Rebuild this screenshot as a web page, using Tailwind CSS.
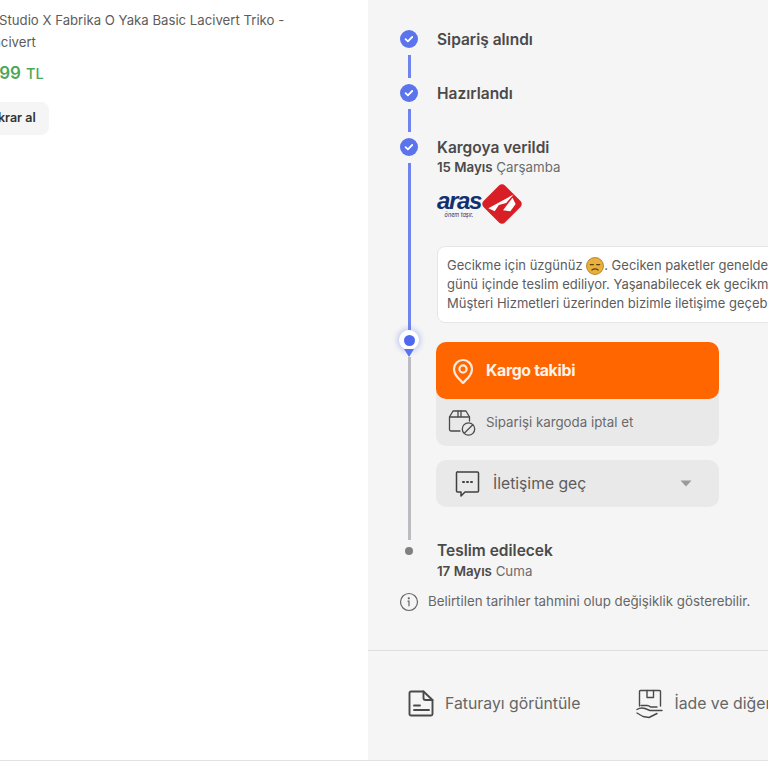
<!DOCTYPE html>
<html lang="tr">
<head>
<meta charset="utf-8">
<script src="https://cdn.jsdelivr.net/npm/@tailwindcss/browser@4"></script>
</head>
<body class="bg-white">
<div class="w-[768px] h-[768px] overflow-hidden font-['Inter','Noto_Sans',sans-serif] bg-white">
 <div class="w-[768px] h-[761px] flex border-b border-[#e2e2e2]">
  <!-- left column -->
  <div class="w-[368px] shrink-0 overflow-hidden pt-[9px]">
    <div class="text-[13.2px] leading-[22px] text-[#5c5c5c] whitespace-nowrap">
      <div class="-ml-[1px]">Studio X Fabrika O Yaka Basic Lacivert Triko -</div>
      <div class="-ml-[14px]">Lacivert</div>
    </div>
    <div class="-ml-[24px] mt-[8px] h-[22px] flex items-baseline gap-[5px] text-[#4ca75a] font-semibold whitespace-nowrap">
      <span class="text-[17px]">1.299</span><span class="text-[14.5px] font-medium">TL</span>
    </div>
    <div class="mt-[19px] -ml-[30px] w-[79px] h-[33px] rounded-[8px] bg-[#f5f5f5] flex items-center justify-center text-[12.5px] font-semibold text-[#333333] whitespace-nowrap">Tekrar al</div>
  </div>

  <!-- right column -->
  <div class="flex-1 min-w-0 bg-[#f5f5f5] overflow-hidden flex flex-col">
    <div class="pl-[32px] pt-[30px] flex flex-col">
      <!-- step 1 -->
      <div class="flex gap-[19px] h-[54px]">
        <div class="w-[18px] flex flex-col items-center shrink-0">
          <svg class="w-[18px] h-[18px] shrink-0" viewBox="0 0 18 18"><circle cx="9" cy="9" r="9" fill="#5b74ec"/><path d="M5.6 9.2l2.3 2.2 4.3-4.4" fill="none" stroke="#fff" stroke-width="1.8" stroke-linecap="round" stroke-linejoin="round"/></svg>
          <div class="w-[3px] h-[23px] mt-[7px] bg-[#6f84ef]"></div>
        </div>
        <div class="pt-[1px] text-[15.5px] leading-[18px] font-semibold text-[#4a4a4a] whitespace-nowrap">Sipariş alındı</div>
      </div>
      <!-- step 2 -->
      <div class="flex gap-[19px] h-[54px]">
        <div class="w-[18px] flex flex-col items-center shrink-0">
          <svg class="w-[18px] h-[18px] shrink-0" viewBox="0 0 18 18"><circle cx="9" cy="9" r="9" fill="#5b74ec"/><path d="M5.6 9.2l2.3 2.2 4.3-4.4" fill="none" stroke="#fff" stroke-width="1.8" stroke-linecap="round" stroke-linejoin="round"/></svg>
          <div class="w-[3px] h-[23px] mt-[7px] bg-[#6f84ef]"></div>
        </div>
        <div class="pt-[1px] text-[15.5px] leading-[18px] font-semibold text-[#4a4a4a] whitespace-nowrap">Hazırlandı</div>
      </div>
      <!-- step 3 -->
      <div class="flex gap-[19px] h-[402px]">
        <div class="w-[18px] flex flex-col items-center shrink-0">
          <svg class="w-[18px] h-[18px] shrink-0" viewBox="0 0 18 18"><circle cx="9" cy="9" r="9" fill="#5b74ec"/><path d="M5.6 9.2l2.3 2.2 4.3-4.4" fill="none" stroke="#fff" stroke-width="1.8" stroke-linecap="round" stroke-linejoin="round"/></svg>
          <div class="w-[3px] h-[167px] mt-[7px] bg-[#6f84ef]"></div>
          <div class="w-[20px] h-[20px] shrink-0 rounded-full bg-white flex items-center justify-center shadow-[0_0_5px_2px_rgba(91,116,236,0.3)]">
            <div class="w-[11px] h-[11px] rounded-full bg-[#4f68ee]"></div>
          </div>
          <svg class="w-[10px] h-[8px] shrink-0 -mt-[1px]" viewBox="0 0 10 8"><path d="M0 0h10L5 8z" fill="#5b74ec"/></svg>
          <div class="w-[3px] flex-1 bg-[#bcbcc0]"></div>
        </div>
        <div class="w-[400px] shrink-0 flex flex-col">
          <div class="pt-[1px] text-[15.5px] leading-[18px] font-semibold text-[#4a4a4a] whitespace-nowrap">Kargoya verildi</div>
          <div class="mt-[1px] text-[13.3px] leading-[18px] text-[#6b6b6b] whitespace-nowrap"><span class="font-semibold text-[#4a4a4a]">15 Mayıs</span> Çarşamba</div>
          <!-- aras logo -->
          <div class="mt-[7px] -ml-[1px] h-[42px] flex items-center">
            <div class="flex flex-col items-center w-[46px] gap-[1px]">
              <span class="h-[21px] text-[24px] leading-[21px] font-bold italic tracking-[-1.4px] text-[#12306f] font-['Liberation_Sans',sans-serif]">aras</span>
              <span class="h-[7px] text-[5.5px] leading-[7px] italic text-[#12306f]">önem taşır.</span>
            </div>
            <svg class="w-[44px] h-[44px] -ml-[2px] shrink-0" viewBox="0 0 42 42">
              <rect x="6.500" y="6.500" width="29" height="29" rx="4" transform="rotate(45 21 21)" fill="#d91f26"/>
              <path d="M8 25 L32 12 L25 20 L18 22 L14 28z" fill="#fff"/>
              <path d="M22 27 L31 15 L34 21 L29 28z" fill="#fff"/>
            </svg>
          </div>
          <!-- note -->
          <div class="mt-[21px] w-[380px] h-[77px] rounded-[8px] bg-white border border-[#e6e6e6] px-[9px] py-[9px] text-[13px] leading-[19px] text-[#5c5c5c] whitespace-nowrap">
            <div class="flex items-center">Gecikme için üzgünüz&nbsp;<svg class="w-[18px] h-[18px] shrink-0" viewBox="0 0 17 17"><circle cx="8.500" cy="8.500" r="8" fill="#e9b13c" stroke="#a9791f" stroke-width=".8"/><path d="M4 7.200h3M10 7.200h3" stroke="#5a4015" stroke-width="1.100" stroke-linecap="round"/><path d="M5.500 12.300c2-1.500 4-1.500 6 0" fill="none" stroke="#5a4015" stroke-width="1.100" stroke-linecap="round"/></svg>. Geciken paketler genelde</div>
            <div>günü içinde teslim ediliyor. Yaşanabilecek ek gecikme</div>
            <div>Müşteri Hizmetleri üzerinden bizimle iletişime geçebilirsin.</div>
          </div>
          <!-- actions -->
          <div class="mt-[19px] -ml-[1px] w-[283px] rounded-[10px] bg-[#e9e9e9]">
            <div class="h-[57px] rounded-[10px] bg-[#ff6600] flex items-center gap-[11px] pl-[15px]">
              <svg class="w-[24px] h-[28px] shrink-0" viewBox="0 0 24 28" fill="none" stroke="#ffeadb" stroke-width="2.200"><path d="M12 26C7 21 3 17.500 3 12a9 9 0 0 1 18 0c0 5.500-4 9-9 14z" stroke-linejoin="round"/><circle cx="12" cy="12" r="3.600"/></svg>
              <span class="text-[15.8px] font-bold tracking-[-0.3px] text-[#fff3ea] whitespace-nowrap">Kargo takibi</span>
            </div>
            <div class="h-[47px] flex items-center gap-[10px] pl-[11px]">
              <svg class="w-[29px] h-[29px] shrink-0" viewBox="0 0 29 29" fill="none" stroke="#4a4a4a" stroke-width="1.300" stroke-linecap="round" stroke-linejoin="round"><path d="M13 23H4a1.500 1.500 0 0 1-1.500-1.500V9L6 3h13l3.500 6v4"/><path d="M2.500 9h20M11 3v6M14 3v6"/><circle cx="21.500" cy="21" r="6.200"/><path d="M17.500 25l8-8"/></svg>
              <span class="text-[13.3px] text-[#6a6a6a] whitespace-nowrap">Siparişi kargoda iptal et</span>
            </div>
          </div>
          <div class="mt-[14px] -ml-[1px] w-[283px] h-[47px] rounded-[10px] bg-[#e9e9e9] flex items-center pl-[19px] pr-[27px]">
            <svg class="w-[25px] h-[28px] shrink-0" viewBox="0 0 25 28" fill="none" stroke="#3f3f3f" stroke-width="1.500" stroke-linejoin="round"><path d="M3 2h19.500a1 1 0 0 1 1 1v18a1 1 0 0 1-1 1H10l-4 4v-4H2.500a1 1 0 0 1-1-1V3a1 1 0 0 1 1.500-1z"/><path d="M8 12h1M12 12h1M16 12h1" stroke-width="2" stroke-linecap="round"/></svg>
            <span class="ml-[13px] text-[15.7px] text-[#5c5c5c] whitespace-nowrap">İletişime geç</span>
            <svg class="ml-auto w-[12px] h-[7px]" viewBox="0 0 12 7"><path d="M0.500 0.500h11L6 6.500z" fill="#9a9a9a"/></svg>
          </div>
        </div>
      </div>
      <!-- step 4 -->
      <div class="flex gap-[19px] mt-[2px]">
        <div class="w-[18px] h-[18px] flex items-center justify-center shrink-0">
          <div class="w-[8px] h-[8px] rounded-full bg-[#808080]"></div>
        </div>
        <div class="flex flex-col">
          <div class="text-[15.5px] leading-[18px] font-semibold text-[#4a4a4a] whitespace-nowrap">Teslim edilecek</div>
          <div class="mt-[2px] text-[13.3px] leading-[18px] text-[#6b6b6b] whitespace-nowrap"><span class="font-semibold text-[#4a4a4a]">17 Mayıs</span> Cuma</div>
        </div>
      </div>
      <!-- info -->
      <div class="mt-[12px] flex items-center h-[20px] gap-[9px]">
        <svg class="w-[20px] h-[20px] shrink-0 -ml-[1px]" viewBox="0 0 20 20" fill="none" stroke="#666" stroke-width="1.200" stroke-linecap="round"><circle cx="10" cy="10" r="8.500"/><path d="M9 9.200h1v4.600"/><circle cx="9.800" cy="6.300" r=".5" fill="#666"/></svg>
        <span class="text-[13.3px] text-[#666666] whitespace-nowrap">Belirtilen tarihler tahmini olup değişiklik gösterebilir.</span>
      </div>
    </div>
    <!-- footer -->
    <div class="mt-[38px] h-[110px] border-t border-[#dedede] flex items-center pl-[40px] pb-[4px] gap-[57px]">
      <div class="flex items-center gap-[10px] shrink-0">
        <svg class="w-[27px] h-[27px] shrink-0" viewBox="0 0 27 27" fill="none" stroke="#4a4a4a" stroke-width="1.900" stroke-linejoin="round" stroke-linecap="round"><path d="M3 1.500h12.500l9 8.500v14a1.500 1.500 0 0 1-1.500 1.500H3a1.500 1.500 0 0 1-1.500-1.500V3A1.500 1.500 0 0 1 3 1.500z"/><path d="M15.500 1.500V8a2 2 0 0 0 2 2h7M6 15.500h6M6 20h15"/></svg>
        <span class="text-[15.8px] text-[#666666] whitespace-nowrap">Faturayı görüntüle</span>
      </div>
      <div class="flex items-center gap-[10px] shrink-0">
        <svg class="w-[28px] h-[30px] shrink-0 -ml-[1px]" viewBox="0 0 28 30" fill="none" stroke="#4a4a4a" stroke-width="1.400" stroke-linejoin="round" stroke-linecap="round"><path d="M3.500 17V2.500a1 1 0 0 1 1-1h19a1 1 0 0 1 1 1V17"/><path d="M11 1.500v7h6.500v-7"/><path d="M5 16.500h6c2 0 3 1 3.500 1.500h6.500M1 20.500c3-2 5-2 8-1l5 2h12M1 24l6 3.500 6 1 8-4"/></svg>
        <span class="text-[15.8px] text-[#666666] whitespace-nowrap">İade ve diğer talepler</span>
      </div>
    </div>
  </div>
 </div>
</div>
</body>
</html>
